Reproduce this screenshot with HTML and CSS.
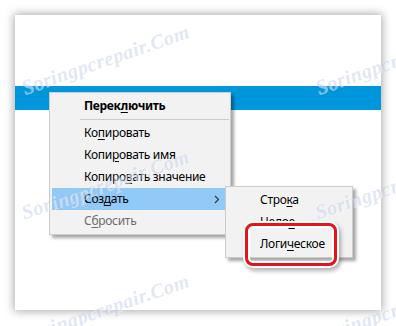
FILE: index.html
```html
<!DOCTYPE html>
<html lang="ru">
<head>
  <meta charset="UTF-8">
  <title>Создать параметр</title>
  <link rel="stylesheet" href="styles.css">
</head>
<body>
  <div class="page">
    <div class="window">
      <div class="top-space"></div>
      <div class="selected-row"></div>

      <div class="menu main-menu">
        <div class="menu-item bold">Перек<u>л</u>ючить</div>
        <div class="separator"></div>
        <div class="menu-item">Ко<u>п</u>ировать</div>
        <div class="menu-item">Копи<u>р</u>овать имя</div>
        <div class="menu-item">Копиро<u>в</u>ать значение</div>
        <div class="menu-item active">Соз<u>д</u>ать
          <svg class="arrow" width="6" height="9" viewBox="0 0 6 9"><path d="M1 1l3.5 3.5L1 8" fill="none" stroke="#333" stroke-width="1.1"/></svg>
        </div>
        <div class="menu-item disabled">С<u>б</u>росить</div>
      </div>

      <div class="menu sub-menu">
        <div class="menu-item">Стро<u>к</u>а</div>
        <div class="menu-item">Цело<u>е</u></div>
        <div class="menu-item">Логи<u>ч</u>еское</div>
      </div>

      <div class="highlight-box"></div>
    </div>

    <span class="watermark" style="left:22px;top:76px">Soringpcrepair.Com</span>
    <span class="watermark" style="left:316px;top:76px">Soringpcrepair.Com</span>
    <span class="watermark" style="left:22px;top:201px">Soringpcrepair.Com</span>
    <span class="watermark" style="left:316px;top:201px">Soringpcrepair.Com</span>
    <span class="watermark" style="left:22px;top:325px">Soringpcrepair.Com</span>
    <span class="watermark" style="left:316px;top:325px">Soringpcrepair.Com</span>
  </div>
</body>
</html>
```

FILE: styles.css
```css
body {
  margin: 0;
  background-color: #fff;
  font-family: "Noto Sans", "Open Sans", sans-serif;
}

.page {
  position: relative;
  width: 396px;
  height: 326px;
  overflow: hidden;
  padding: 15px;
  box-sizing: border-box;
}

.window {
  position: relative;
  width: 366px;
  height: 295px;
  background-color: #fff;
  box-shadow: 0 0 9px 1px rgba(0, 0, 0, 0.35);
}

.top-space {
  height: 71px;
}

.selected-row {
  height: 24px;
  background-color: #0096dc;
}

/* context menus */
.menu {
  position: absolute;
  background-color: #f2f2f2;
  border: 1px solid #cccccc;
  box-shadow: 3px 3px 3px rgba(0, 0, 0, 0.35);
  font-size: 12px;
  letter-spacing: -0.3px;
  color: #000;
}

.main-menu {
  left: 34px;
  top: 77px;
  width: 174px;
  padding: 2px 4px 2px 2px;
}

.sub-menu {
  left: 210px;
  top: 171px;
  width: 120px;
  padding: 2px 4px 2px 2px;
}

.menu-item {
  position: relative;
  height: 22px;
  line-height: 22px;
  padding-left: 32px;
  white-space: nowrap;
}

.menu-item u {
  text-decoration-thickness: 1px;
  text-underline-offset: 2px;
}

.bold {
  font-weight: bold;
}

.active {
  background-color: #91c9f7;
}

.disabled {
  color: #6d6d6d;
}

.separator {
  height: 1px;
  background-color: #cccccc;
  margin: 2px -3px 2px 28px;
}

.arrow {
  position: absolute;
  right: 6px;
  top: 7px;
}

/* red annotation frame */
.highlight-box {
  position: absolute;
  left: 230px;
  top: 208px;
  width: 86px;
  height: 37px;
  border: 3px solid #e3141b;
  border-radius: 8px;
  box-shadow: 0 0 0 2px #fff, inset 0 0 0 2px #fff, 2px 3px 4px 2px rgba(0, 0, 0, 0.3);
}

.watermark {
  position: absolute;
  font-family: "Liberation Serif", serif;
  font-style: italic;
  font-weight: bold;
  font-size: 20px;
  line-height: 24px;
  letter-spacing: 0.5px;
  color: rgba(170, 185, 225, 0.35);
  text-shadow: 1px 1px 0 rgba(255, 255, 255, 0.5);
  transform: rotate(-19deg);
  transform-origin: 0 50%;
  white-space: nowrap;
  pointer-events: none;
}
```
